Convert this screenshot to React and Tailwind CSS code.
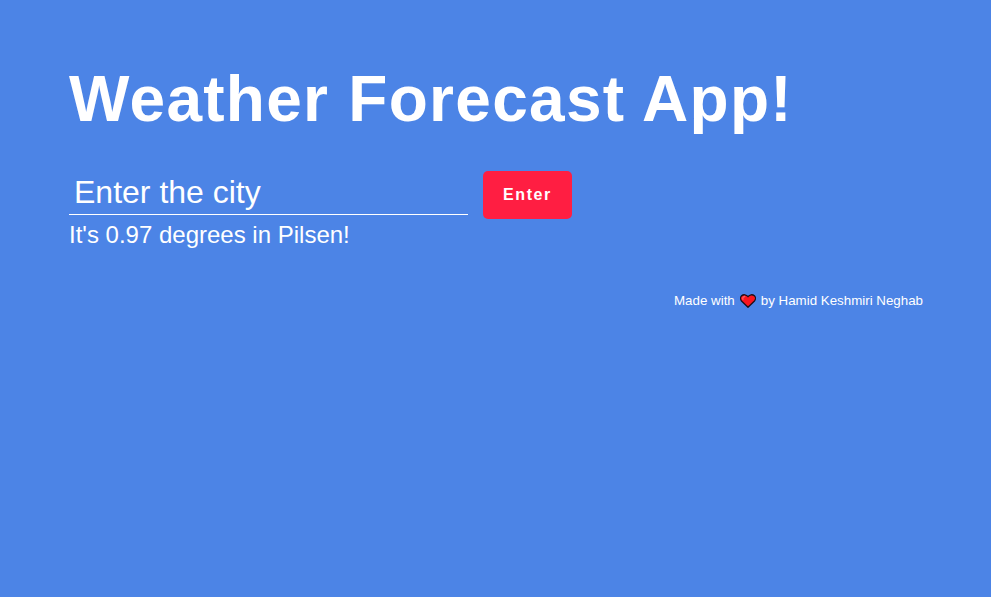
export default function App() {
  return (
    <main className="min-h-screen bg-[#4c84e6] pl-[69px] pr-[68px] pt-[62px] font-['Liberation_Sans',Arial,sans-serif] text-white">
      <h1 className="text-[64px] font-bold leading-[74px] tracking-[1.28px]">Weather Forecast App!</h1>
      <form className="mt-[35px] flex h-12 gap-[15px]">
        <input
          type="text"
          placeholder="Enter the city"
          className="h-11 w-[399px] border-b border-white bg-transparent px-[5px] pb-[2px] text-[32px] outline-none placeholder:text-white"
        />
        <button type="button" className="h-12 w-[89px] rounded-[5px] bg-[#ff1e42] text-base font-bold tracking-[1.6px]">
          Enter
        </button>
      </form>
      <p className="mt-[2px] text-2xl leading-[28px]">It's 0.97 degrees in Pilsen!</p>
      <footer className="mt-[44px] flex h-4 items-center justify-end gap-[5px] text-[13.333px]">
        <span>Made with</span>
        <svg className="h-[14px] w-4" viewBox="0 0 16 14">
          <path d="M8 13.200 1.500 7C.2 5.500.3 3 1.600 1.800 3.400.2 6.300.4 8 2.700 9.700.4 12.600.2 14.400 1.800 15.700 3 15.800 5.500 14.500 7Z" fill="#f9151f" stroke="#1d1018" strokeWidth="1.300" strokeLinejoin="round" />
          <path d="M2.900 5.300C2.500 3.800 3.200 2.700 4.700 2.500" fill="none" stroke="#ff5c60" strokeWidth="1.300" strokeLinecap="round" />
        </svg>
        <span>by Hamid Keshmiri Neghab</span>
      </footer>
    </main>
  );
}
